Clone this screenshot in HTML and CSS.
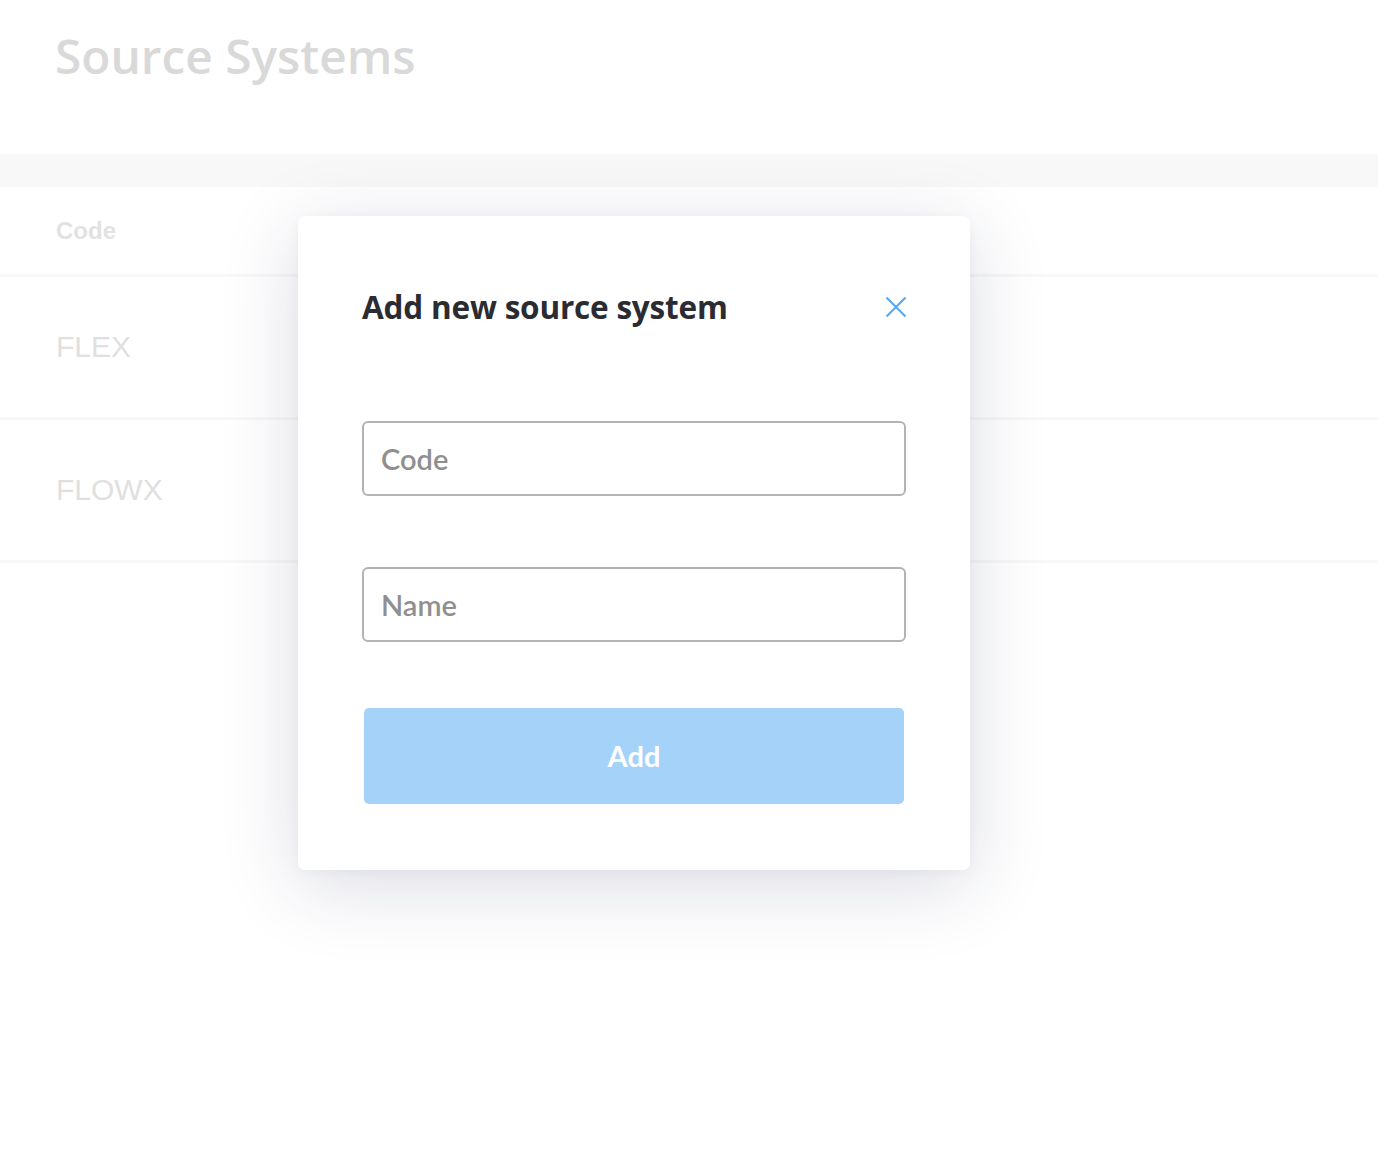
FILE: index.html
```html
<!DOCTYPE html>
<html>
<head>
<meta charset="utf-8">
<link rel="stylesheet" href="styles.css">
</head>
<body>
<div class="page">
  <header class="page-head">
    <h1 class="page-title">Source Systems</h1>
  </header>
  <div class="band"></div>
  <div class="table">
    <div class="row head-row"><span class="th">Code</span></div>
    <div class="row"><span class="td">FLEX</span></div>
    <div class="row"><span class="td">FLOWX</span></div>
  </div>
</div>

<div class="modal">
  <div class="modal-head">
    <h2 class="modal-title">Add new source system</h2>
    <button class="close" aria-label="Close">
      <svg width="22" height="22" viewBox="0 0 22 22"><path d="M1.5 1.5 L20.5 20.5 M20.5 1.5 L1.5 20.5" stroke="#59aaf3" stroke-width="2.2" fill="none" stroke-linecap="butt"/></svg>
    </button>
  </div>
  <form class="form">
    <input class="field" type="text" placeholder="Code">
    <input class="field" type="text" placeholder="Name">
    <button class="add" type="button">Add</button>
  </form>
</div>
</body>
</html>
```

FILE: styles.css
```css
* { box-sizing: border-box; }
html, body { margin: 0; padding: 0; background: #ffffff; }
body { width: 1378px; height: 1176px; overflow: hidden; position: relative; font-family: "Open Sans", sans-serif; }

.page-head { height: 154px; padding: 24px 0 0 55px; }
.page-title { margin: 0; font-family: "Open Sans", sans-serif; font-weight: 600; font-size: 47.8px; line-height: 64px; color: #d9d9d9; }

.band { height: 33px; background: #f8f8f8; }

.row { height: 143px; display: flex; align-items: center; padding-left: 56px; border-bottom: 3px solid #f8f8f8; }
.head-row { height: 90px; }
.th { font-family: "Liberation Sans", Arial, sans-serif; font-weight: 700; font-size: 24px; color: #e2e2e2; }
.td { font-family: "Liberation Sans", Arial, sans-serif; font-size: 30px; color: #e0e0e0; }

.modal {
  position: absolute; left: 298px; top: 216px; width: 672px; height: 654px;
  background: #fff; border-radius: 7px;
  box-shadow: 0 16px 80px rgba(30, 40, 80, 0.16), 0 2px 12px rgba(30,40,80,0.04);
  padding: 64px 64px 0 64px;
}
.modal-head { display: flex; justify-content: space-between; align-items: center; height: 52px; }
.modal-title { margin: 0; font-family: "Open Sans", sans-serif; font-weight: 700; font-size: 31.5px; color: #2b2c31; letter-spacing: -0.2px; }
.close { background: none; border: 0; padding: 0; width: 22px; height: 22px; margin: 2px -1px 0 0; display: flex; }

.form { display: flex; flex-direction: column; margin-top: 89px; }
.field {
  width: 544px; height: 75px; border: 2px solid #b3b3b3; border-radius: 6px;
  padding: 0 17px; font-family: "Lato", sans-serif; font-size: 29px; color: #333; margin-bottom: 71px;
  outline: none;
}
.field:nth-child(2) { margin-bottom: 66px; }
.field::placeholder { color: #8f8f8f; font-weight: 600; }
.add {
  margin-left: 2px; width: 540px; height: 96px; border: 0; border-radius: 5px; background: #a5d2f9;
  color: #fff; font-family: "Lato", sans-serif; font-weight: 700; font-size: 29px; padding-bottom: 2px;
}
```
